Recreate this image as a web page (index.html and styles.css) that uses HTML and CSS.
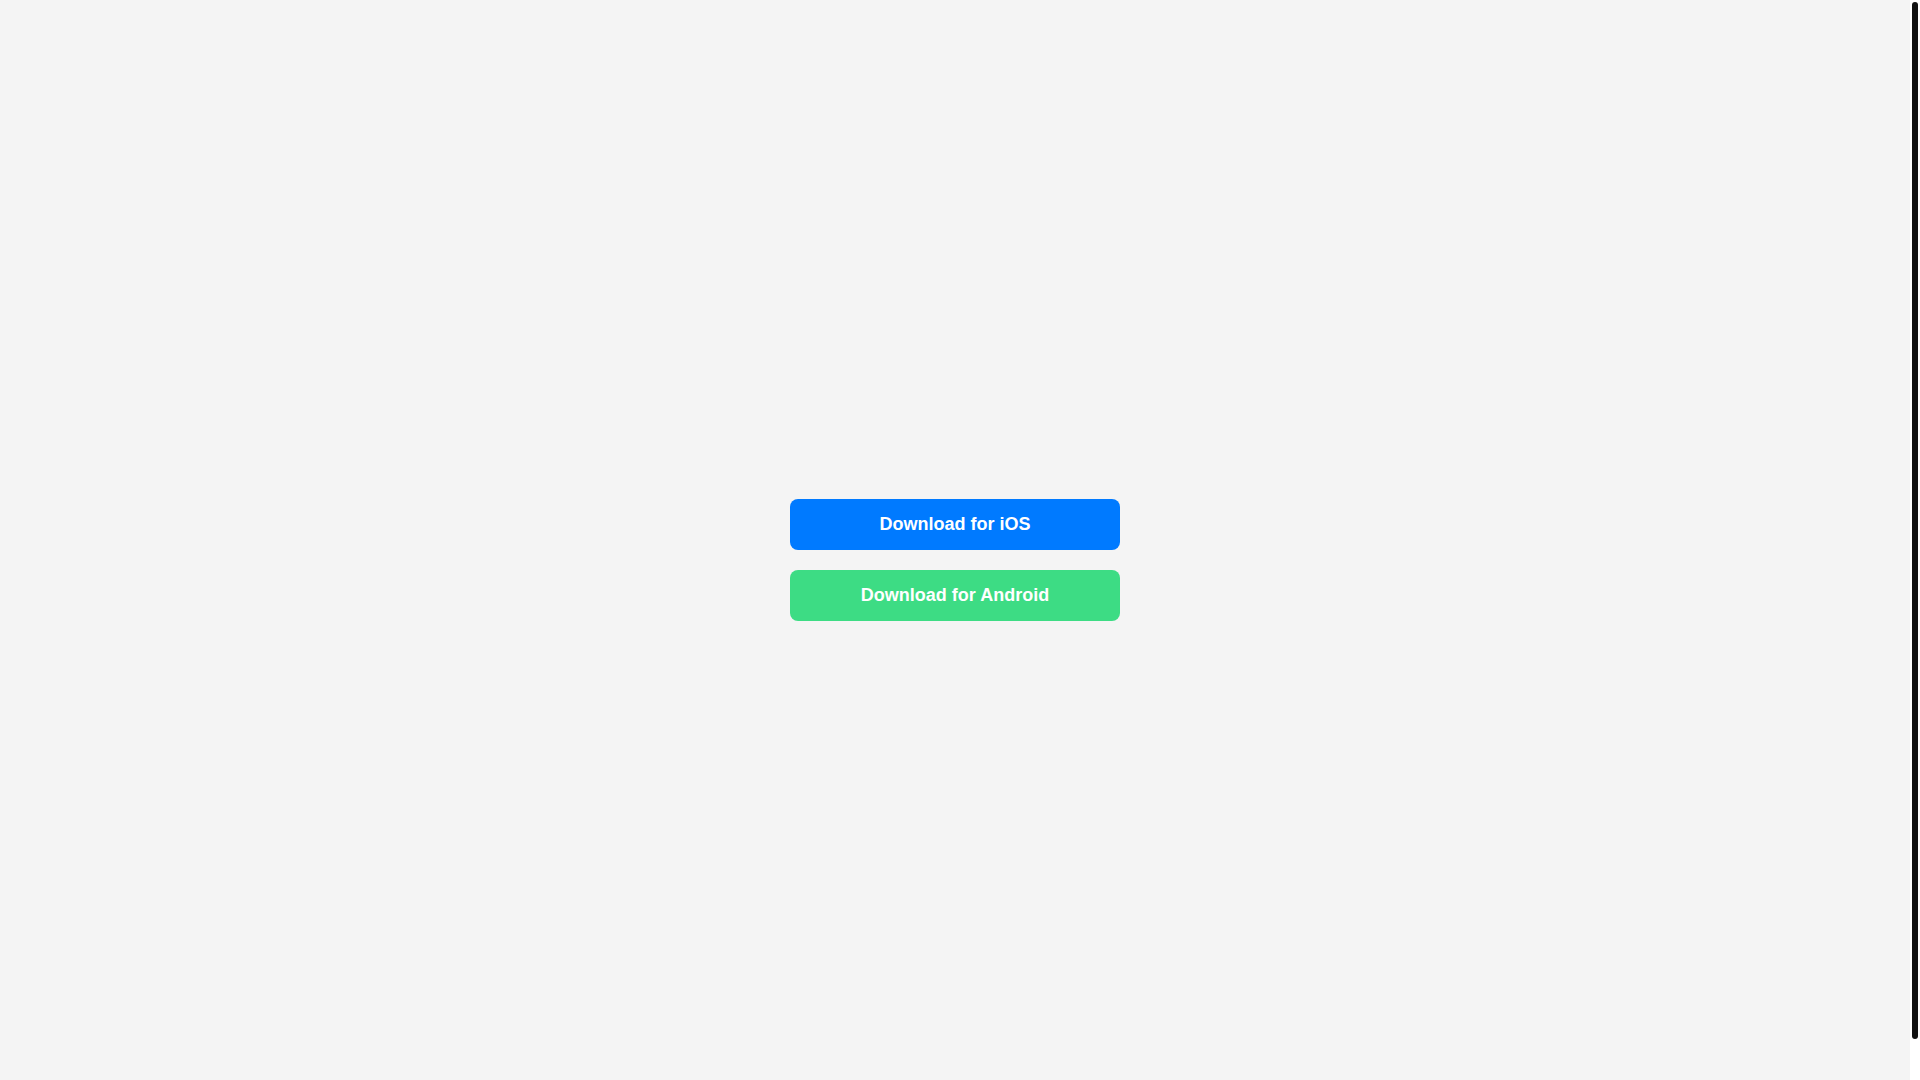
FILE: index.html
```html
<!DOCTYPE html>
<html lang="en">
<head>
    <meta charset="utf-8">
    <meta name="viewport" content="width=device-width, initial-scale=1.0">
    <title>Download</title>
    <link rel="stylesheet" href="styles.css">
</head>
<body>
    <div class="page">
        <div class="container">
            <a class="button ios" href="#">Download for iOS</a>
            <a class="button android" href="#">Download for Android</a>
        </div>
    </div>
    <div class="scrollbar" aria-hidden="true">
        <div class="thumb"></div>
    </div>
</body>
</html>
```

FILE: styles.css
```css
body {
    display: flex;
    height: 100vh;
    margin: 0;
    font-family: Arial, "Liberation Sans", sans-serif;
    background-color: #f4f4f4;
}

.page {
    flex: 1;
    overflow-y: auto;
    scrollbar-width: none;
}

.container {
    display: flex;
    flex-direction: column;
    justify-content: center;
    align-items: center;
    gap: 20px;
    min-height: 100vh;
    padding: 20px;
}

.button {
    width: 300px;
    padding: 15px;
    border-radius: 8px;
    font-size: 18px;
    line-height: 21px;
    font-weight: bold;
    text-align: center;
    text-decoration: none;
    color: #fff;
}

.ios {
    background-color: #007aff;
}

.android {
    background-color: #3ddc84;
}

/* custom scrollbar */
.scrollbar {
    display: flex;
    box-sizing: border-box;
    width: 10px;
    padding: 2px 2px 41px;
    background-color: #fff;
}

.thumb {
    flex: 1;
    border-radius: 3px;
    background-color: #111;
}
```
